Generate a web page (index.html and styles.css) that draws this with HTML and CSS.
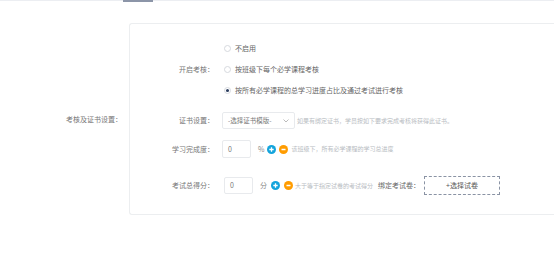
FILE: index.html
```html
<!DOCTYPE html>
<html lang="zh">
<head>
<meta charset="utf-8">
<link rel="stylesheet" href="styles.css">
</head>
<body>
<div class="topbar"><div class="tab"></div></div>
<div class="section">
  <div class="section-label">考核及证书设置：</div>
  <div class="card">
    <div class="row radio-row">
      <div class="label">开启考核：</div>
      <div class="radios">
        <div class="radio"><span class="circle"></span><span>不启用</span></div>
        <div class="radio"><span class="circle"></span><span>按班级下每个必学课程考核</span></div>
        <div class="radio"><span class="circle checked"></span><span>按所有必学课程的总学习进度占比及通过考试进行考核</span></div>
      </div>
    </div>
    <div class="row cert-row">
      <div class="label">证书设置：</div>
      <div class="select"><span>-选择证书模版-</span><svg class="chev" width="6" height="4" viewBox="0 0 6 4"><path d="M0.5 0.5 L3 3 L5.5 0.5" fill="none" stroke="#aaa" stroke-width="0.8"/></svg></div>
      <div class="hint cert-hint">如果有绑定证书，学员按如下要求完成考核将获得此证书。</div>
    </div>
    <div class="row progress-row">
      <div class="label">学习完成度：</div>
      <div class="input">0</div>
      <span class="unit">%</span>
      <span class="btn plus"><svg width="9" height="9" viewBox="0 0 9 9"><circle cx="4.5" cy="4.5" r="4.5" fill="#14a4dc"/><path d="M2.3 4.5 H6.7 M4.5 2.3 V6.7" stroke="#fff" stroke-width="1.3"/></svg></span>
      <span class="btn minus"><svg width="9" height="9" viewBox="0 0 9 9"><circle cx="4.5" cy="4.5" r="4.5" fill="#ff9c00"/><path d="M2.5 4.5 H6.5" stroke="#fff" stroke-width="1.3"/></svg></span>
      <span class="hint">该班级下，所有必学课程的学习总进度</span>
    </div>
    <div class="row exam-row">
      <div class="label">考试总得分：</div>
      <div class="input exam-input">0</div>
      <span class="unit">分</span>
      <span class="btn plus"><svg width="9" height="9" viewBox="0 0 9 9"><circle cx="4.5" cy="4.5" r="4.5" fill="#14a4dc"/><path d="M2.3 4.5 H6.7 M4.5 2.3 V6.7" stroke="#fff" stroke-width="1.3"/></svg></span>
      <span class="btn minus"><svg width="9" height="9" viewBox="0 0 9 9"><circle cx="4.5" cy="4.5" r="4.5" fill="#ff9c00"/><path d="M2.5 4.5 H6.5" stroke="#fff" stroke-width="1.3"/></svg></span>
      <span class="hint">大于等于指定试卷的考试得分</span>
      <span class="bind-label">绑定考试卷：</span>
      <div class="pick">+选择试卷</div>
    </div>
  </div>
</div>
</body>
</html>
```
FILE: styles.css
```css
html, body {
  margin: 0;
  padding: 0;
  background: #fff;
  overflow: hidden;
  width: 554px;
  height: 258px;
}
body {
  font-family: "Noto Sans CJK SC", "Noto Sans", sans-serif;
  font-size: 7px;
  color: #777;
  line-height: 1;
}
.topbar {
  height: 1px;
  background: #eceef2;
  position: relative;
}
.tab {
  position: absolute;
  left: 123px;
  top: 0;
  width: 30px;
  height: 2px;
  background: #8c95a8;
}
.section {
  display: flex;
  align-items: center;
  margin-top: 22px;
  width: 554px;
}
.section-label {
  width: 122px;
  padding-right: 7px;
  text-align: right;
  color: #777;
  white-space: nowrap;
  flex: none;
}
.card {
  flex: 1;
  min-width: 0;
  border: 1px solid #eceef0;
  border-right: none;
  border-radius: 3px 0 0 3px;
  padding: 14px 0 19px 0;
  box-sizing: border-box;
  overflow: hidden;
}
.row {
  display: flex;
  align-items: center;
  white-space: nowrap;
}
.label {
  width: 84px;
  text-align: right;
  color: #777;
  flex: none;
}
.radios {
  margin-left: 7px;
  display: flex;
  flex-direction: column;
}
.radio {
  height: 21px;
  display: flex;
  align-items: center;
  color: #666;
}
.circle {
  width: 7px;
  height: 7px;
  box-sizing: border-box;
  border: 1px solid #d6d9de;
  border-radius: 50%;
  margin-left: 3px;
  margin-right: 4px;
  position: relative;
}
.circle.checked::after {
  content: "";
  position: absolute;
  left: 1px;
  top: 1px;
  width: 3px;
  height: 3px;
  border-radius: 50%;
  background: #2b3d5e;
}
.cert-row {
  margin-top: 11px;
  height: 17px;
}
.select {
  margin-left: 8px;
  width: 73px;
  height: 17px;
  box-sizing: border-box;
  border: 1px solid #e8eaed;
  border-radius: 2px;
  display: flex;
  align-items: center;
  justify-content: space-between;
  padding: 0 5px 0 5px;
  color: #777;
  font-size: 6.5px;
}
.chev {
  display: block;
}
.hint {
  font-size: 6px;
  color: #b8bcc2;
}
.cert-hint {
  margin-left: 2px;
}
.progress-row {
  margin-top: 11px;
  height: 18px;
}
.input {
  margin-left: 8px;
  width: 29px;
  height: 18px;
  box-sizing: border-box;
  border: 1px solid #e8eaed;
  border-radius: 2px;
  display: flex;
  align-items: center;
  padding-left: 5px;
  color: #777;
}
.exam-input {
  margin-left: 10px;
  height: 17px;
}
.unit {
  margin-left: 7px;
  color: #888;
}
.btn {
  display: block;
  width: 9px;
  height: 9px;
}
.btn svg {
  display: block;
}
.progress-row .plus { margin-left: 3px; }
.progress-row .minus { margin-left: 3px; }
.progress-row .hint { margin-left: 3px; }
.exam-row {
  margin-top: 18px;
  height: 19px;
}
.exam-row .plus { margin-left: 4px; }
.exam-row .minus { margin-left: 4px; }
.exam-row .hint { margin-left: 2px; }
.bind-label {
  margin-left: 5px;
  color: #666;
}
.pick {
  margin-left: 4px;
  width: 76px;
  height: 19px;
  box-sizing: border-box;
  border: 1px dashed #8a93a4;
  display: flex;
  align-items: center;
  justify-content: center;
  color: #555;
}
```
